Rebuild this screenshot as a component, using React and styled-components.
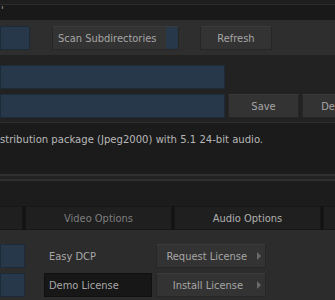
import styled, { createGlobalStyle } from "styled-components";

const Global = createGlobalStyle`
  html, body {
    margin: 0;
    padding: 0;
    background: #222222;
    overflow: hidden;
  }
  body {
    font-family: "DejaVu Sans Condensed", "Liberation Sans", sans-serif;
    font-size: 11px;
    color: #b4b4b4;
  }
`;

const Page = styled.div`
  width: 335px;
  height: 300px;
  display: flex;
  flex-direction: column;
  overflow: hidden;
`;

const TopStrip = styled.div`
  height: 4px;
  background: #1e1e1e;
  border-bottom: 1px solid #2c2c2c;
`;

const PathBar = styled.div`
  height: 15px;
  background: #191919;
  color: #9a9a9a;
  font-size: 11px;
  line-height: 12px;
  padding-left: 1px;
`;

const Toolbar = styled.div`
  height: 35px;
  box-sizing: border-box;
  background: #2e2e2e;
  padding-top: 6px;
  display: flex;
  align-items: flex-start;
`;

const BlueField = styled.div`
  width: ${(p) => p.$w}px;
  height: 24px;
  box-sizing: border-box;
  background: #27384b;
  border: 1px solid #1d2a38;
  flex-shrink: 0;
`;

const Button = styled.div`
  width: ${(p) => p.$w}px;
  height: 24px;
  box-sizing: border-box;
  background: #333333;
  border: 1px solid #262626;
  border-top-color: #3a3a3a;
  color: #a6a6a6;
  display: flex;
  align-items: center;
  justify-content: ${(p) => (p.$left ? "flex-start" : "center")};
  padding-left: ${(p) => (p.$left ? "5px" : "0")};
  flex-shrink: 0;
  white-space: nowrap;
  overflow: hidden;
`;

const ScanButton = styled(Button)`
  position: relative;
  padding-right: 12px;
`;

const ScanFlag = styled.span`
  position: absolute;
  right: 0;
  top: 0;
  bottom: 0;
  width: 12px;
  background: #27384b;
`;

const Main = styled.div`
  height: 67px;
  box-sizing: border-box;
  padding-top: 10px;
  display: flex;
  flex-direction: column;
  gap: 5px;
  background: #222222;
`;

const Row = styled.div`
  display: flex;
  gap: ${(p) => p.$gap ?? 3}px;
  align-items: center;
`;

const Description = styled.div`
  height: 52px;
  box-sizing: border-box;
  background: #1b1b1b;
  border-top: 1px solid #2e2e2e;
  padding-top: 10px;
  color: #b8b8b8;
  white-space: nowrap;
  font-size: 11.2px;
`;

const Rule = styled.div`
  height: 2px;
  background: #303030;
  margin-top: ${(p) => p.$mt || 0}px;
`;

const Spacer = styled.div`
  height: 25px;
  background: #1c1c1c;
`;

const Tabs = styled.div`
  height: 24px;
  display: flex;
  gap: 2px;
  background: #121212;
  margin-left: -124px;
`;

const Tab = styled.div`
  width: ${(p) => p.$w}px;
  flex-shrink: 0;
  box-sizing: border-box;
  background: #1f1f1f;
  border: 1px solid #171717;
  color: ${(p) => (p.$active ? "#b0b0b0" : "#7e7e7e")};
  display: flex;
  align-items: center;
  justify-content: center;
`;

const Panel = styled.div`
  flex: 1;
  background: #2c2c2c;
  padding-top: 14px;
  display: flex;
  flex-direction: column;
  gap: 5px;
`;

const Label = styled.div`
  width: 108px;
  height: 24px;
  box-sizing: border-box;
  margin-left: 19px;
  margin-right: 4px;
  padding-left: 4px;
  display: flex;
  align-items: center;
  color: #a8a8a8;
  flex-shrink: 0;
  background: ${(p) => (p.$box ? "#171717" : "transparent")};
  border: 1px solid ${(p) => (p.$box ? "#101010" : "transparent")};
`;

const LicenseButton = styled(Button)`
  justify-content: flex-end;
  padding-right: 4px;
  gap: ${(p) => p.$gap}px;
`;

const Arrow = styled.span`
  width: 0;
  height: 0;
  border-top: 4px solid transparent;
  border-bottom: 4px solid transparent;
  border-left: 4px solid #6a6a6a;
`;

export default function App() {
  return (
    <Page>
      <Global />
      <TopStrip />
      <PathBar>'</PathBar>
      <Toolbar>
        <BlueField $w={30} />
        <Row $gap={21} style={{ marginLeft: 22 }}>
          <ScanButton $w={127} $left>
            Scan Subdirectories
            <ScanFlag />
          </ScanButton>
          <Button $w={72}>Refresh</Button>
        </Row>
      </Toolbar>
      <Main>
        <BlueField $w={225} />
        <Row>
          <BlueField $w={225} />
          <Button $w={71}>Save</Button>
          <Button $w={71}>Delete</Button>
        </Row>
      </Main>
      <Description>
        stribution package (Jpeg2000) with 5.1 24-bit audio.
      </Description>
      <Rule />
      <Rule $mt={3} />
      <Spacer />
      <Tabs>
        <Tab $w={147} />
        <Tab $w={147}>Video Options</Tab>
        <Tab $w={147} $active>Audio Options</Tab>
        <Tab $w={147} />
      </Tabs>
      <Panel>
        <Row $gap={0}>
          <BlueField $w={25} />
          <Label>Easy DCP</Label>
          <LicenseButton $w={110} $gap={10}>
            Request License
            <Arrow />
          </LicenseButton>
        </Row>
        <Row $gap={0}>
          <BlueField $w={25} />
          <Label $box>Demo License</Label>
          <LicenseButton $w={110} $gap={14}>
            Install License
            <Arrow />
          </LicenseButton>
        </Row>
      </Panel>
    </Page>
  );
}
